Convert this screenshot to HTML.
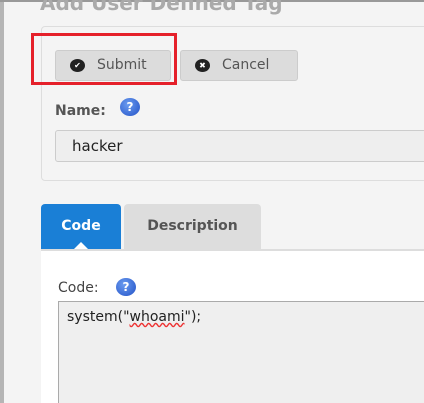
<!DOCTYPE html>
<html><head><style>
html,body{margin:0;width:424px;height:403px;overflow:hidden}
body{background:#f4f4f4;font-family:"DejaVu Sans",sans-serif;position:relative}
.a{position:absolute}
.help{position:absolute;width:20px;height:18px;border-radius:50%;background:radial-gradient(circle at 40% 35%,#6b9cf0,#2251c6);color:#fff;font-weight:bold;font-size:12px;text-align:center;line-height:18px}
.btn{position:absolute;top:50px;height:31px;background:#dcdcdc;border:1px solid #ccc;border-radius:3px;box-sizing:border-box;color:#555;font-size:14px;line-height:29px}
.ic{position:absolute;left:14px;top:8px;width:15px;height:13px;border-radius:50%;background:#222;color:#fff;font-size:8px;line-height:13px;text-align:center;font-weight:bold}
</style></head><body>
<div class="a" style="left:0;top:0;width:4px;height:403px;background:#b5b5b5"></div>
<div class="a" style="left:0;top:0;width:424px;height:2px;background:#999"></div>
<div class="a" style="left:40px;top:-9px;font-size:20px;color:#aaa;font-weight:bold">Add User Defined Tag</div>
<div class="a" style="left:41px;top:26px;width:400px;height:153px;border:1px solid #ddd;border-radius:4px;background:#f4f4f4"></div>
<div class="btn" style="left:55px;width:116px"><span class="ic">✔</span><span style="position:absolute;left:41px">Submit</span></div>
<div class="btn" style="left:180px;width:118px"><span class="ic">✖</span><span style="position:absolute;left:41px">Cancel</span></div>
<div class="a" style="left:31px;top:33px;width:140px;height:46px;border:3px solid #e5202a"></div>
<div class="a" style="left:55px;top:103px;font-size:14px;font-weight:bold;color:#555">Name:</div>
<div class="help" style="left:120px;top:98px">?</div>
<div class="a" style="left:55px;top:130px;width:380px;height:32px;box-sizing:border-box;border:1px solid #ccc;border-radius:3px;background:#eee;font-size:15px;color:#222;padding-left:16px;line-height:30px">hacker</div>
<div class="a" style="left:41px;top:204px;width:80px;height:45px;background:#1a7fd6;border-radius:4px 4px 0 0;color:#fff;font-weight:bold;font-size:14px;text-align:center;line-height:45px">Code</div>
<div class="a" style="left:74px;top:242px;width:0;height:0;border-left:7px solid transparent;border-right:7px solid transparent;border-bottom:7px solid #fff"></div>
<div class="a" style="left:124px;top:204px;width:137px;height:45px;background:#ddd;border-radius:4px 4px 0 0;color:#555;font-weight:bold;font-size:14px;text-align:center;line-height:45px">Description</div>
<div class="a" style="left:41px;top:249px;width:400px;height:160px;background:#fff;border-top:2px solid #ddd"></div>
<div class="a" style="left:58px;top:280px;font-size:14px;color:#444">Code:</div>
<div class="help" style="left:116px;top:278px">?</div>
<div class="a" style="left:58px;top:301px;width:380px;height:110px;box-sizing:border-box;border:1px solid #aaa;background:#efefef;font-size:14px;color:#222;padding:7px 8px">system("<span style="text-decoration:underline wavy #e33">whoami</span>");</div>
</body></html>
